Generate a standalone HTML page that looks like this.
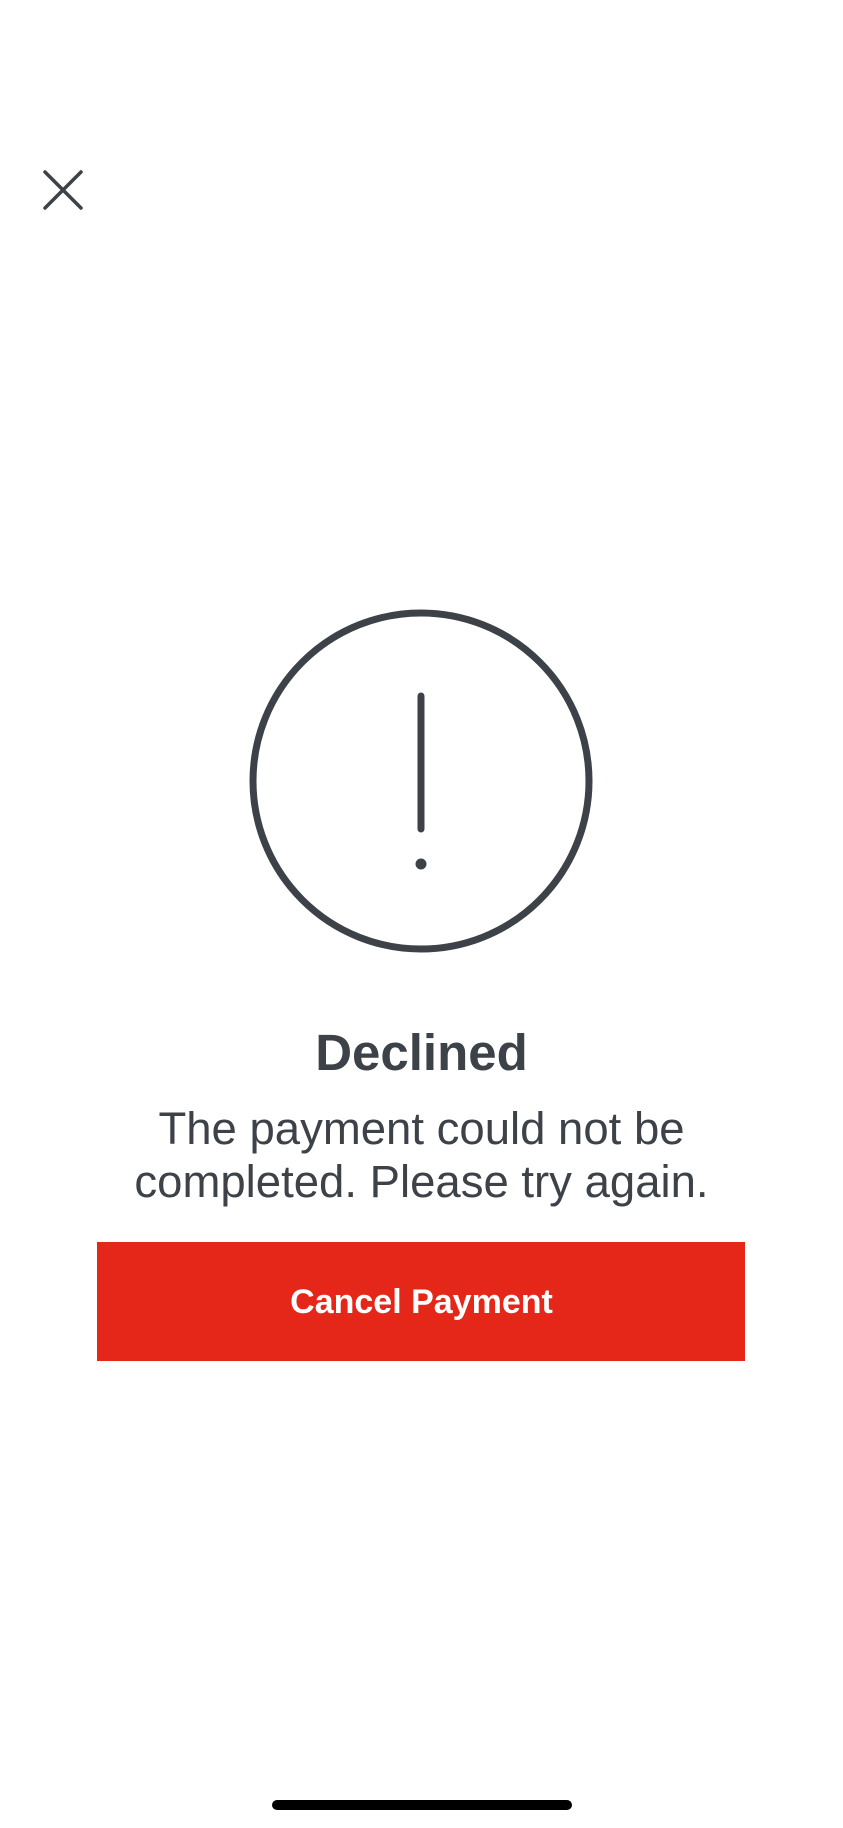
<!DOCTYPE html>
<html><head><style>
html,body{margin:0;padding:0;width:843px;height:1828px;background:#fff;overflow:hidden;position:relative;font-family:"Liberation Sans",sans-serif;color:#3d4249}
.t{position:absolute;left:0;width:843px;text-align:center;white-space:nowrap}
</style></head><body>
<svg style="position:absolute;left:0;top:0" width="843" height="1828">
<path d="M45 172 L81 208 M81 172 L45 208" stroke="#3d4249" stroke-width="3.5" stroke-linecap="round"/>
<circle cx="421" cy="781" r="168" fill="none" stroke="#3d4249" stroke-width="7"/>
<line x1="421" y1="696" x2="421" y2="829" stroke="#3d4249" stroke-width="7" stroke-linecap="round"/>
<circle cx="421" cy="864" r="5.5" fill="#3d4249"/>
<rect x="97" y="1242" width="648" height="119" fill="#e52719"/>
<rect x="272" y="1800" width="300" height="10" rx="5" fill="#000"/>
</svg>
<div class="t" style="top:1023px;font-size:51px;font-weight:bold;line-height:60px">Declined</div>
<div class="t" style="top:1102px;font-size:45.5px;line-height:53px">The payment could not be<br>completed. Please try again.</div>
<div class="t" style="top:1282px;font-size:34px;font-weight:bold;color:#fff;line-height:40px">Cancel Payment</div>
</body></html>
